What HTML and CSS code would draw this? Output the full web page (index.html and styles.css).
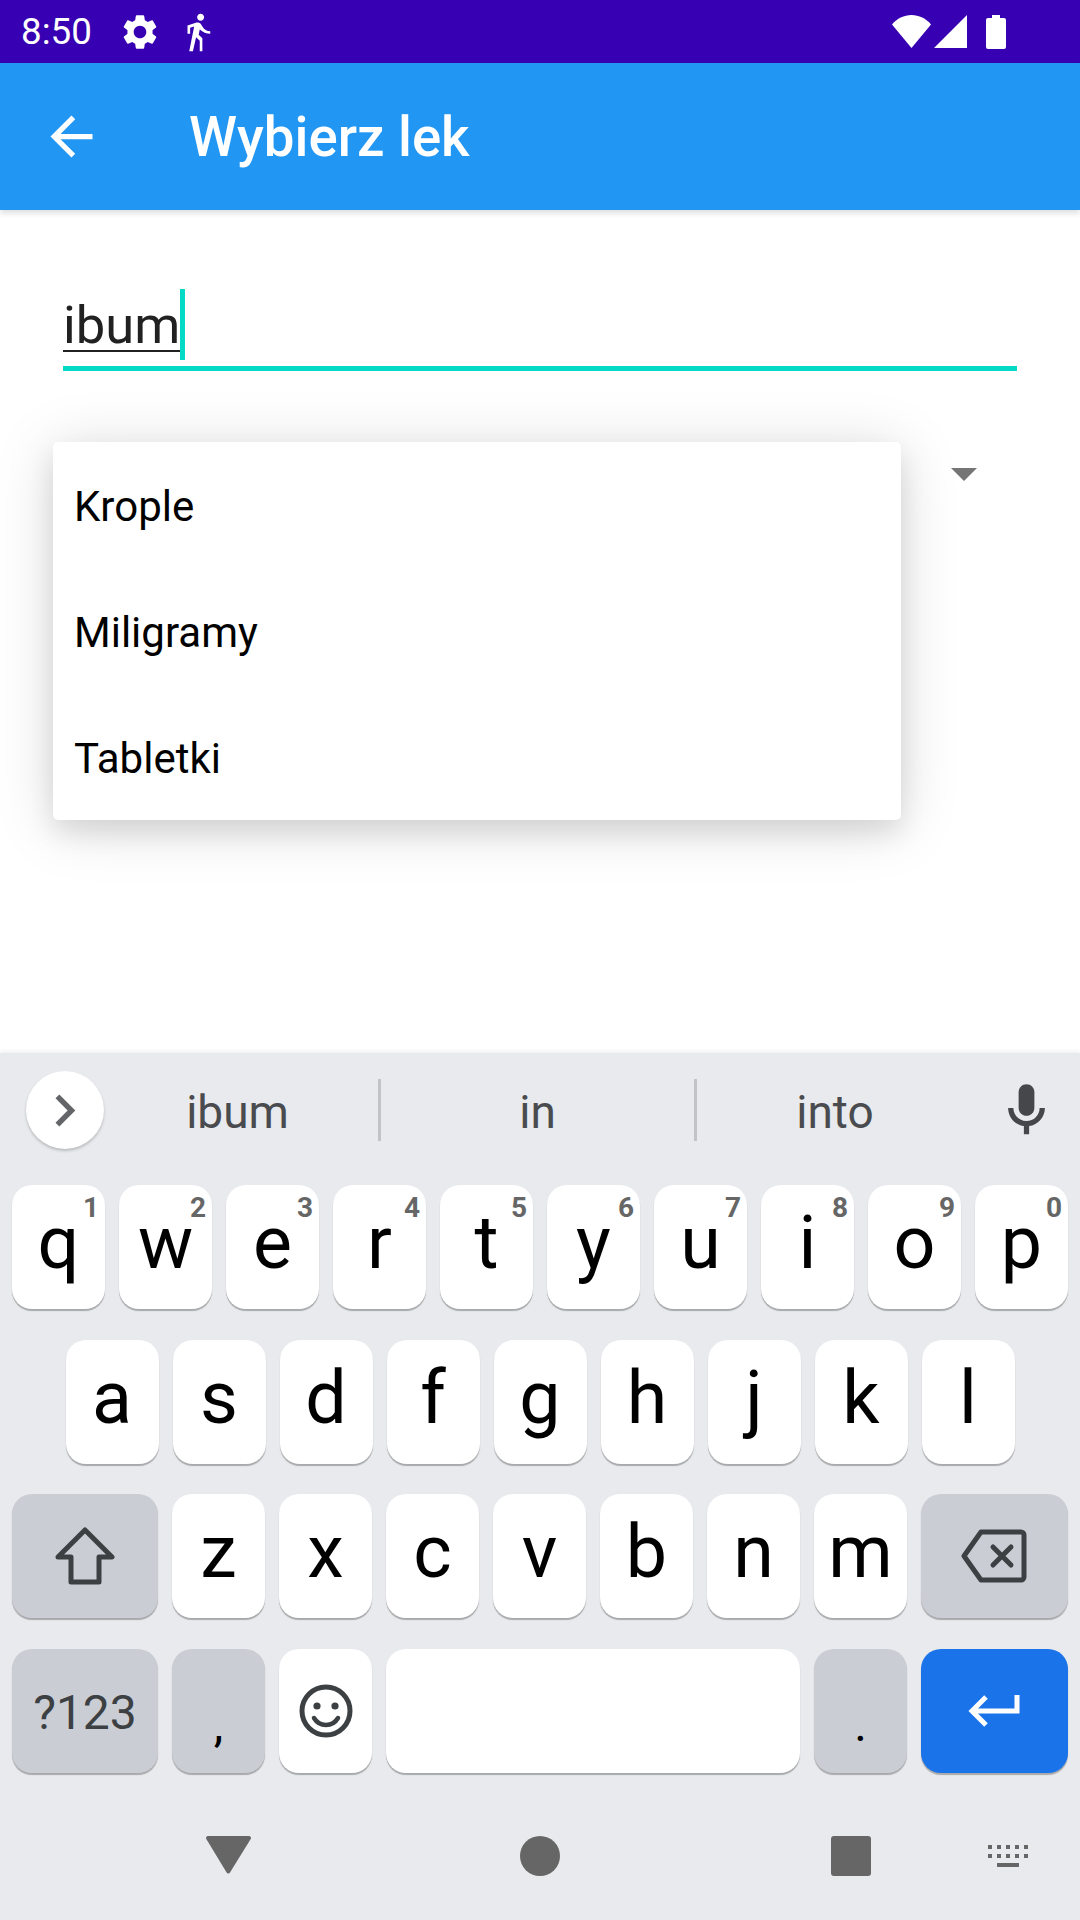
FILE: index.html
```html
<!DOCTYPE html>
<html lang="pl">
<head>
    <meta charset="UTF-8">
    <meta name="viewport" content="width=device-width, initial-scale=1.0">
    <title>Wybierz lek</title>
    <link rel="stylesheet" href="styles.css">
</head>
<body>
    <div class="status-bar">
        <span class="time">8:50</span>
        <svg class="status-gear" viewBox="0 0 24 24"><path d="M19.14 12.94c.04-.3.06-.61.06-.94 0-.32-.02-.64-.07-.94l2.03-1.58c.18-.14.23-.41.12-.61l-1.92-3.32c-.12-.22-.37-.29-.59-.22l-2.39.96c-.5-.38-1.03-.7-1.62-.94l-.36-2.54c-.04-.24-.24-.41-.48-.41h-3.84c-.24 0-.43.17-.47.41l-.36 2.54c-.59.24-1.13.57-1.62.94l-2.39-.96c-.22-.08-.47 0-.59.22L2.74 8.87c-.12.21-.08.47.12.61l2.03 1.58c-.05.3-.09.63-.09.94s.02.64.07.94l-2.03 1.58c-.18.14-.23.41-.12.61l1.92 3.32c.12.22.37.29.59.22l2.39-.96c.5.38 1.03.7 1.62.94l.36 2.54c.05.24.24.41.48.41h3.84c.24 0 .44-.17.47-.41l.36-2.54c.59-.24 1.13-.56 1.62-.94l2.39.96c.22.08.47 0 .59-.22l1.92-3.32c.12-.22.07-.47-.12-.61l-2.01-1.58zM12 15.6c-1.98 0-3.6-1.62-3.6-3.6s1.62-3.6 3.6-3.6 3.6 1.62 3.6 3.6-1.62 3.6-3.6 3.6z"/></svg>
        <svg class="status-walk" viewBox="0 0 24 24"><path d="M13.5 5.5c1.1 0 2-.9 2-2s-.9-2-2-2-2 .9-2 2 .9 2 2 2zM9.8 8.9L7 23h2.100l1.800-8 2.100 2v6h1.500v-7.500l-2.100-2 .6-3C14.800 12 16.800 13 19 13v-1.500c-1.900 0-3.500-1-4.300-2.400l-1-1.600c-.4-.6-1-1-1.700-1-.3 0-.5.1-.8.1L6 8.300V13h1.500V9.600l2.300-.7"/></svg>
        <div class="status-right">
            <svg class="status-wifi" viewBox="0 0 39 33"><path d="M19.5 33L0 9.5C5 3.5 12 0 19.5 0S34 3.5 39 9.5z"/></svg>
            <svg class="status-signal" viewBox="0 0 33 33"><path d="M33 0v33H0z"/></svg>
            <svg class="status-battery" viewBox="0 0 20 34"><path d="M6 0h8v3h4a2 2 0 0 1 2 2v27a2 2 0 0 1-2 2H2a2 2 0 0 1-2-2V5a2 2 0 0 1 2-2h4z"/></svg>
        </div>
    </div>

    <header class="app-bar">
        <svg class="back-icon" viewBox="0 0 24 24"><path d="M20 11H7.83l5.59-5.59L12 4l-8 8 8 8 1.41-1.41L7.83 13H20v-2z"/></svg>
        <h1 class="app-title">Wybierz lek</h1>
    </header>

    <main class="content">
        <div class="field">
            <span class="field-text">ibum</span>
            <span class="cursor"></span>
        </div>
        <div class="spinner"><span class="spinner-arrow"></span></div>
        <ul class="menu">
            <li>Krople</li>
            <li>Miligramy</li>
            <li>Tabletki</li>
        </ul>
    </main>

    <section class="keyboard">
        <div class="suggestions">
            <div class="expand">
                <svg viewBox="0 0 24 36"><path d="M5 5l13 13L5 31" fill="none" stroke="#646568" stroke-width="5"/></svg>
            </div>
            <div class="word sep">ibum</div>
            <div class="word sep">in</div>
            <div class="word">into</div>
            <div class="mic">
                <svg viewBox="0 0 24 24"><path d="M12 14c1.66 0 3-1.34 3-3V5c0-1.66-1.34-3-3-3S9 3.34 9 5v6c0 1.66 1.34 3 3 3z"/><path d="M17 11c0 2.76-2.24 5-5 5s-5-2.24-5-5H5c0 3.53 2.61 6.43 6 6.92V21h2v-3.08c3.39-.49 6-3.39 6-6.92h-2z"/></svg>
            </div>
        </div>

        <div class="keys">
            <div class="row">
                <div class="key">q<span class="hint">1</span></div>
                <div class="key">w<span class="hint">2</span></div>
                <div class="key">e<span class="hint">3</span></div>
                <div class="key">r<span class="hint">4</span></div>
                <div class="key">t<span class="hint">5</span></div>
                <div class="key">y<span class="hint">6</span></div>
                <div class="key">u<span class="hint">7</span></div>
                <div class="key">i<span class="hint">8</span></div>
                <div class="key">o<span class="hint">9</span></div>
                <div class="key">p<span class="hint">0</span></div>
            </div>
            <div class="row row-home">
                <div class="key">a</div>
                <div class="key">s</div>
                <div class="key">d</div>
                <div class="key">f</div>
                <div class="key">g</div>
                <div class="key">h</div>
                <div class="key">j</div>
                <div class="key">k</div>
                <div class="key">l</div>
            </div>
            <div class="row">
                <div class="key key-shift key-fn key-icon">
                    <svg class="shift-icon" viewBox="0 0 60 58"><path d="M30 3L57 30H44V55H16V30H3z" fill="none" stroke="#3c4043" stroke-width="5" stroke-linejoin="round"/></svg>
                </div>
                <div class="key">z</div>
                <div class="key">x</div>
                <div class="key">c</div>
                <div class="key">v</div>
                <div class="key">b</div>
                <div class="key">n</div>
                <div class="key">m</div>
                <div class="key key-wide key-fn key-icon">
                    <svg class="del-icon" viewBox="0 0 66 54"><path d="M20 3H60a3 3 0 0 1 3 3V48a3 3 0 0 1-3 3H20L3 27z" fill="none" stroke="#3c4043" stroke-width="5" stroke-linejoin="round"/><path d="M32 18L50 36M50 18L32 36" stroke="#3c4043" stroke-width="5" stroke-linecap="round"/></svg>
                </div>
            </div>
            <div class="row">
                <div class="key key-shift key-fn key-label">?123</div>
                <div class="key key-fn key-punct">,</div>
                <div class="key key-icon">
                    <svg class="emoji-icon" viewBox="0 0 54 54"><circle cx="27" cy="27" r="24" fill="none" stroke="#3c4043" stroke-width="5"/><circle cx="18" cy="22" r="3.6" fill="#3c4043"/><circle cx="36" cy="22" r="3.6" fill="#3c4043"/><path d="M15 34c3 5 7 7 12 7s9-2 12-7" fill="none" stroke="#3c4043" stroke-width="4.5" stroke-linecap="round"/></svg>
                </div>
                <div class="key key-space"></div>
                <div class="key key-fn key-punct">.</div>
                <div class="key key-wide key-enter key-icon">
                    <svg class="enter-icon" viewBox="0 0 52 36"><path d="M49 2V18H5M18 4L4 18L18 32" fill="none" stroke="#fff" stroke-width="5"/></svg>
                </div>
            </div>
        </div>

        <nav class="nav">
            <svg class="nav-back" viewBox="0 0 45 38"><path d="M2 0h41a2 2 0 0 1 1.7 3L24 36.500a2 2 0 0 1-3.400 0L.3 3A2 2 0 0 1 2 0z"/></svg>
            <span class="nav-home"></span>
            <span class="nav-recent"></span>
            <svg class="nav-kbd" viewBox="0 0 40 22"><path d="M0 0h4v4H0zM9 0h4v4H9zM18 0h4v4h-4zM27 0h4v4h-4zM36 0h4v4h-4zM0 9h4v4H0zM9 9h4v4H9zM18 9h4v4h-4zM27 9h4v4h-4zM36 9h4v4h-4zM9 18h22v4H9z"/></svg>
        </nav>
    </section>
</body>
</html>
```

FILE: styles.css
```css
* {
    box-sizing: border-box;
}
body {
    width: 1080px;
    height: 1920px;
    margin: 0;
    overflow: hidden;
    display: flex;
    flex-direction: column;
    font-family: "Roboto", sans-serif;
    background: #fff;
}

/* status bar */
.status-bar {
    height: 63px;
    flex: none;
    display: flex;
    align-items: center;
    padding-left: 21px;
    background: #3700b3;
    color: #fff;
    fill: #fff;
}
.time {
    font-size: 36.75px;
}
.status-gear {
    width: 42px;
    height: 42px;
    margin-left: 27px;
}
.status-walk {
    width: 42px;
    height: 42px;
    margin-left: 16px;
}
.status-right {
    margin-left: auto;
    display: flex;
    align-items: center;
    padding-right: 74px;
}
.status-wifi {
    width: 39px;
    height: 33px;
}
.status-signal {
    width: 33px;
    height: 33px;
    margin-left: 3px;
}
.status-battery {
    width: 20px;
    height: 34px;
    margin-left: 19px;
}

/* toolbar */
.app-bar {
    height: 147px;
    flex: none;
    display: flex;
    align-items: center;
    padding-left: 40px;
    background: #2196f3;
    box-shadow: 0 3px 6px rgba(0, 0, 0, 0.14);
    position: relative;
    z-index: 1;
}
.back-icon {
    width: 63px;
    height: 63px;
    fill: #fff;
}
.app-title {
    margin: 0 0 0 86px;
    font-size: 54.6px;
    font-weight: 500;
    color: #fff;
}

/* form */
.content {
    flex: 1;
    position: relative;
}
.field {
    position: relative;
    margin: 86px 63px 0;
    border-bottom: 5px solid #03dac5;
    line-height: 58px;
    height: 75px;
}
.field-text {
    font-size: 52.5px;
    font-weight: 400;
    color: #212121;
    text-decoration: underline;
    text-decoration-thickness: 2px;
    text-underline-offset: 7px;
}
.cursor {
    position: absolute;
    left: 117px;
    top: -7px;
    width: 5px;
    height: 71px;
    background: #03dac5;
}
.spinner {
    display: flex;
    justify-content: flex-end;
    margin: 97px 103px 0;
}
.spinner-arrow {
    border-left: 13px solid transparent;
    border-right: 13px solid transparent;
    border-top: 13px solid #757575;
}
.menu {
    position: absolute;
    left: 53px;
    top: 232px;
    width: 848px;
    margin: 0;
    padding: 0;
    list-style: none;
    background: #fff;
    border-radius: 5px;
    box-shadow: 0 13px 26px rgba(0, 0, 0, 0.09), 0 6px 60px rgba(0, 0, 0, 0.15);
}
.menu li {
    height: 126px;
    line-height: 129px;
    padding-left: 21px;
    font-size: 42px;
    color: #000;
}

/* keyboard */
.keyboard {
    height: 867px;
    flex: none;
    background: #e8eaed;
    box-shadow: 0 -2px 4px rgba(0, 0, 0, 0.06);
    position: relative;
}
.suggestions {
    height: 132px;
    display: grid;
    grid-template-columns: 97px 284px 316px 276px 1fr;
    align-items: center;
    padding-bottom: 18px;
}
.expand {
    width: 78px;
    height: 78px;
    margin-left: 26px;
    border-radius: 50%;
    background: #fff;
    box-shadow: 0 2px 3px rgba(0, 0, 0, 0.2);
    display: flex;
    align-items: center;
    justify-content: center;
}
.expand svg {
    width: 26px;
    height: 39px;
}
.word {
    height: 62px;
    line-height: 66px;
    text-align: center;
    font-size: 46px;
    color: #4a4b4e;
}
.sep {
    border-right: 3px solid #c2c3c7;
}
.mic {
    display: flex;
    justify-content: center;
}
.mic svg {
    width: 63px;
    height: 63px;
    fill: #46474a;
}
.keys {
    display: flex;
    flex-direction: column;
    gap: 30.5px;
}
.row {
    display: flex;
    gap: 14px;
    padding: 0 12px;
}
.row-home {
    padding-left: 65.5px;
}
.key {
    position: relative;
    width: 93px;
    height: 124px;
    display: flex;
    align-items: center;
    justify-content: center;
    padding-bottom: 8px;
    background: #fff;
    border-radius: 20px;
    box-shadow: 0 2px 1px rgba(0, 0, 0, 0.28);
    font-size: 73.5px;
    color: #000;
}
.hint {
    position: absolute;
    top: 7px;
    right: 6px;
    font-size: 28px;
    line-height: 32px;
    font-weight: 700;
    color: #666;
}
.key-wide {
    width: 147px;
}
.key-shift {
    width: 146px;
}
.key-icon {
    padding: 0;
}
.key-fn {
    background: #cacdd4;
}
.key-label {
    padding: 3px 0 0;
    font-size: 48px;
    color: #3c4043;
}
.key-punct {
    align-items: flex-end;
    padding-bottom: 20px;
    font-size: 48px;
}
.key-space {
    width: 414px;
}
.key-enter {
    background: #1a73e8;
}
.shift-icon {
    width: 60px;
    height: 58px;
}
.del-icon {
    width: 68px;
    height: 54px;
    margin-left: -2px;
}
.emoji-icon {
    width: 54px;
    height: 54px;
}
.enter-icon {
    width: 52px;
    height: 36px;
    margin-left: -2px;
}
.nav {
    display: flex;
    align-items: center;
    height: 147px;
    padding: 20px 0 0 206px;
}
.nav-back {
    width: 45px;
    height: 38px;
    margin-bottom: 3px;
    fill: #666;
}
.nav-home {
    width: 40px;
    height: 40px;
    margin-left: 269px;
    border-radius: 50%;
    background: #666;
}
.nav-recent {
    width: 40px;
    height: 40px;
    margin-left: 271px;
    border-radius: 3px;
    background: #666;
}
.nav-kbd {
    width: 40px;
    height: 22px;
    margin-left: 117px;
    fill: #666;
}
```
